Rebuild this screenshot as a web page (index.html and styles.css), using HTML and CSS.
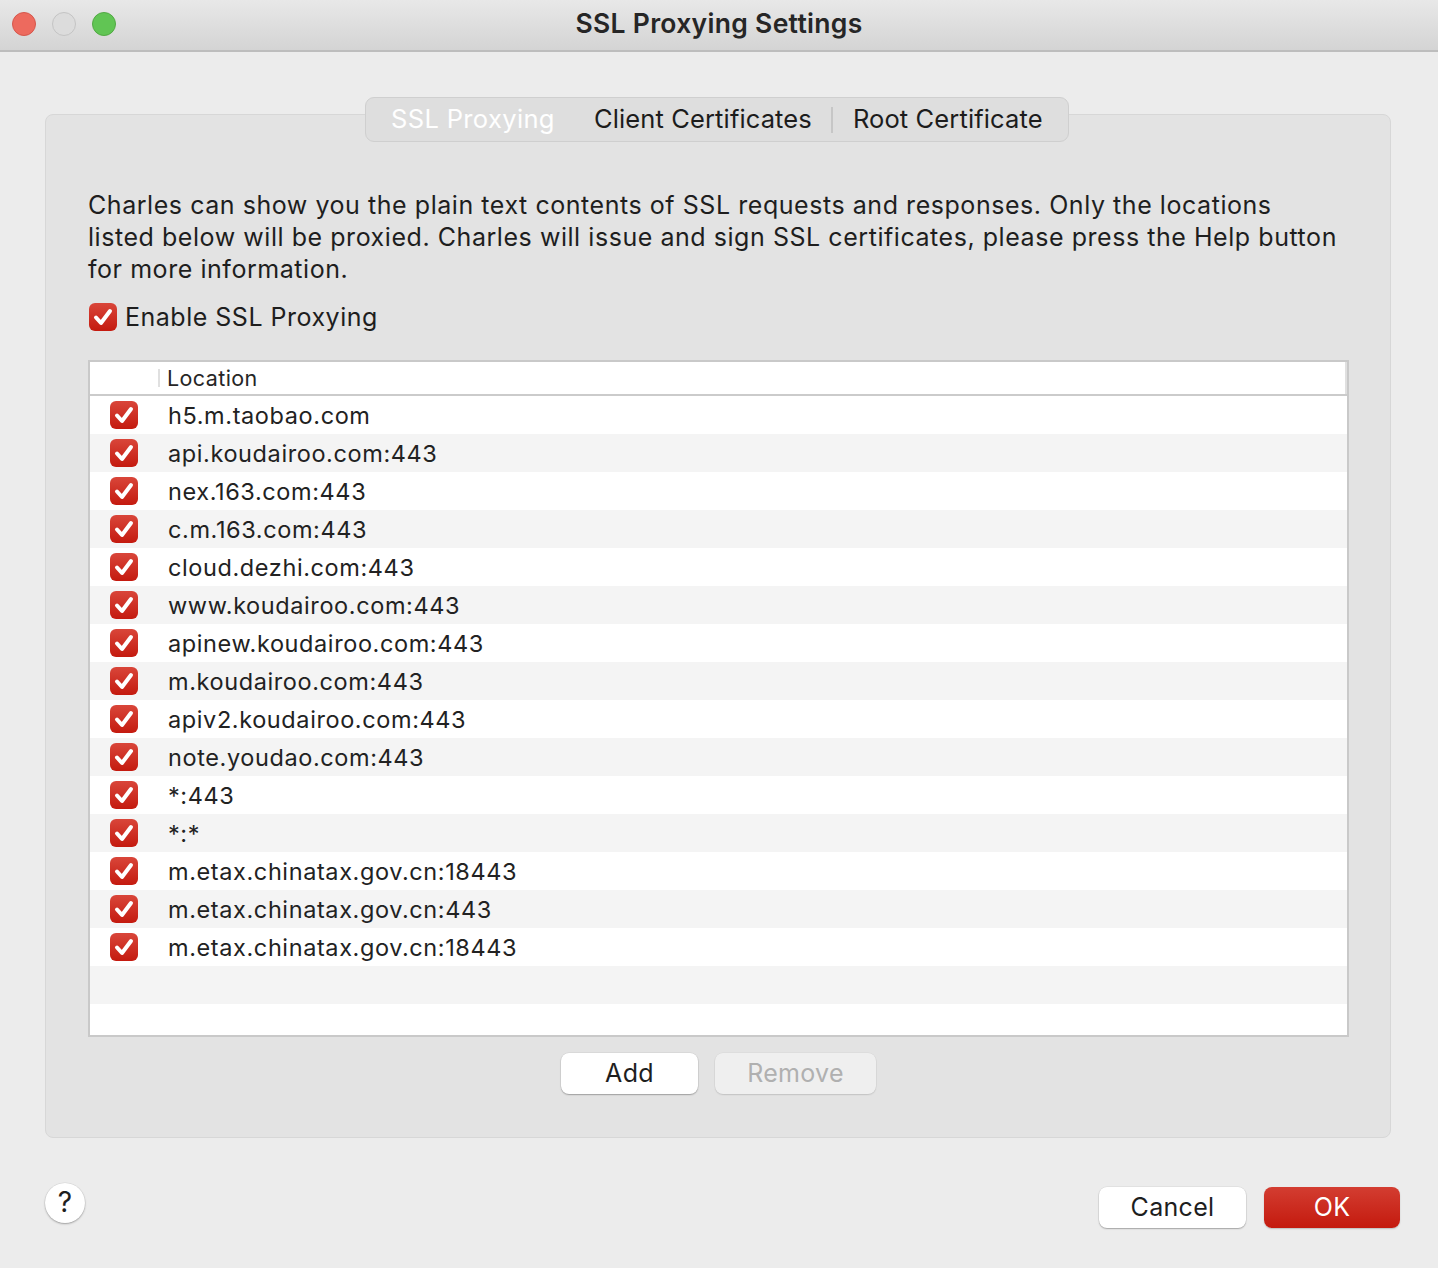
FILE: index.html
```html
<!DOCTYPE html>
<html>
<head>
<meta charset="utf-8">
<link rel="stylesheet" href="styles.css">
</head>
<body>
<div class="window">
  <div class="titlebar">
    <div class="lights">
      <span class="light red"></span>
      <span class="light gray"></span>
      <span class="light green"></span>
    </div>
    <div class="title">SSL Proxying Settings</div>
    <div class="spacer"></div>
  </div>

  <div class="main">
    <div class="group">
      <div class="tabs">
        <div class="tab active">SSL Proxying</div>
        <div class="tab">Client Certificates</div>
        <div class="sep"></div>
        <div class="tab">Root Certificate</div>
      </div>

      <p class="desc">Charles can show you the plain text contents of SSL requests and responses. Only the locations<br>listed below will be proxied. Charles will issue and sign SSL certificates, please press the Help button<br>for more information.</p>

      <label class="enable">
        <span class="cb"><svg viewBox="0 0 28 28"><path d="M7 14.5 L12 20 L21 8" /></svg></span>
        <span>Enable SSL Proxying</span>
      </label>

      <div class="table">
        <div class="thead">
          <div class="th-check"></div>
          <div class="th-loc">Location</div>
        </div>
        <div class="tbody">
          <div class="row"><span class="cb"><svg viewBox="0 0 28 28"><path d="M7 14.5 L12 20 L21 8" /></svg></span><span class="loc">h5.m.taobao.com</span></div>
          <div class="row"><span class="cb"><svg viewBox="0 0 28 28"><path d="M7 14.5 L12 20 L21 8" /></svg></span><span class="loc">api.koudairoo.com:443</span></div>
          <div class="row"><span class="cb"><svg viewBox="0 0 28 28"><path d="M7 14.5 L12 20 L21 8" /></svg></span><span class="loc">nex.163.com:443</span></div>
          <div class="row"><span class="cb"><svg viewBox="0 0 28 28"><path d="M7 14.5 L12 20 L21 8" /></svg></span><span class="loc">c.m.163.com:443</span></div>
          <div class="row"><span class="cb"><svg viewBox="0 0 28 28"><path d="M7 14.5 L12 20 L21 8" /></svg></span><span class="loc">cloud.dezhi.com:443</span></div>
          <div class="row"><span class="cb"><svg viewBox="0 0 28 28"><path d="M7 14.5 L12 20 L21 8" /></svg></span><span class="loc">www.koudairoo.com:443</span></div>
          <div class="row"><span class="cb"><svg viewBox="0 0 28 28"><path d="M7 14.5 L12 20 L21 8" /></svg></span><span class="loc">apinew.koudairoo.com:443</span></div>
          <div class="row"><span class="cb"><svg viewBox="0 0 28 28"><path d="M7 14.5 L12 20 L21 8" /></svg></span><span class="loc">m.koudairoo.com:443</span></div>
          <div class="row"><span class="cb"><svg viewBox="0 0 28 28"><path d="M7 14.5 L12 20 L21 8" /></svg></span><span class="loc">apiv2.koudairoo.com:443</span></div>
          <div class="row"><span class="cb"><svg viewBox="0 0 28 28"><path d="M7 14.5 L12 20 L21 8" /></svg></span><span class="loc">note.youdao.com:443</span></div>
          <div class="row"><span class="cb"><svg viewBox="0 0 28 28"><path d="M7 14.5 L12 20 L21 8" /></svg></span><span class="loc">*:443</span></div>
          <div class="row"><span class="cb"><svg viewBox="0 0 28 28"><path d="M7 14.5 L12 20 L21 8" /></svg></span><span class="loc">*:*</span></div>
          <div class="row"><span class="cb"><svg viewBox="0 0 28 28"><path d="M7 14.5 L12 20 L21 8" /></svg></span><span class="loc">m.etax.chinatax.gov.cn:18443</span></div>
          <div class="row"><span class="cb"><svg viewBox="0 0 28 28"><path d="M7 14.5 L12 20 L21 8" /></svg></span><span class="loc">m.etax.chinatax.gov.cn:443</span></div>
          <div class="row"><span class="cb"><svg viewBox="0 0 28 28"><path d="M7 14.5 L12 20 L21 8" /></svg></span><span class="loc">m.etax.chinatax.gov.cn:18443</span></div>
          <div class="row empty"></div>
          <div class="row empty last"></div>
        </div>
      </div>

      <div class="actions">
        <button class="btn add">Add</button>
        <button class="btn remove" disabled>Remove</button>
      </div>
    </div>

    <div class="footer">
      <button class="help">?</button>
      <div class="footer-right">
        <button class="btn cancel">Cancel</button>
        <button class="btn ok">OK</button>
      </div>
    </div>
  </div>
</div>
</body>
</html>
```

FILE: styles.css
```css
* { box-sizing: border-box; }

html, body {
  margin: 0;
  padding: 0;
}

body {
  width: 1438px;
  height: 1268px;
  background: #ececec;
  font-family: Inter, "Noto Sans", "Liberation Sans", sans-serif;
  color: #1e1e1e;
  overflow: hidden;
}

.window {
  width: 1438px;
  height: 1268px;
  display: flex;
  flex-direction: column;
}

.titlebar {
  height: 52px;
  flex: none;
  display: grid;
  grid-template-columns: 1fr auto 1fr;
  align-items: center;
  background: linear-gradient(#e8e8e8, #d4d4d4);
  border-bottom: 2px solid #bdbdbd;
}

.lights {
  display: flex;
  gap: 16px;
  padding-left: 12px;
  padding-bottom: 2px;
}

.light {
  width: 24px;
  height: 24px;
  border-radius: 50%;
  display: block;
}
.light.red { background: #ed6a5e; border: 1px solid #d5574c; }
.light.gray { background: #dcdcdc; border: 1px solid #c4c4c4; }
.light.green { background: #61c554; border: 1px solid #52a944; }

.title {
  font-size: 26.5px;
  font-weight: 600;
  color: #262626;
  padding-bottom: 4px;
  letter-spacing: 0.3px;
}

.main {
  flex: 1;
  display: flex;
  flex-direction: column;
  padding: 62px 46px 0 45px;
}

.group {
  width: 1346px;
  height: 1024px;
  background: #e3e3e3;
  border: 1px solid #d7d7d7;
  border-radius: 8px;
  display: flex;
  flex-direction: column;
  padding: 0 41px;
}

.tabs {
  align-self: center;
  margin-top: -18px;
  margin-left: -2px;
  width: 704px;
  height: 45px;
  display: flex;
  align-items: center;
  background: #dedede;
  border: 1px solid #cfcfcf;
  border-radius: 9px;
  padding: 0 0 2px 0;
}

.tab {
  font-size: 25.5px;
  letter-spacing: 0.12px;
  color: #1c1c1c;
  white-space: nowrap;
}
.tab.active {
  color: #ffffff;
  padding-left: 25px;
  width: 228px;
  letter-spacing: 0.35px;
}
.sep {
  width: 2px;
  height: 26px;
  background: #c6c6c6;
  margin: 2px 20px 0 19px;
}

.desc {
  margin: 47px 0 0 0;
  font-size: 25px;
  line-height: 32px;
  letter-spacing: 0.55px;
  color: #1e1e1e;
  white-space: nowrap;
  padding-left: 1px;
}

.enable {
  margin-top: 16px;
  display: flex;
  align-items: center;
  gap: 8px;
  height: 32px;
  font-size: 25px;
  letter-spacing: 0.5px;
  padding-left: 2px;
}

.cb {
  width: 28px;
  height: 28px;
  border-radius: 6px;
  background: linear-gradient(#d9463a, #c41a0f);
  display: flex;
  align-items: center;
  justify-content: center;
  flex: none;
}
.cb svg {
  width: 28px;
  height: 28px;
  display: block;
}
.cb svg path {
  fill: none;
  stroke: #ffffff;
  stroke-width: 4;
  stroke-linecap: round;
  stroke-linejoin: round;
}

.table {
  margin-top: 27px;
  margin-left: 1px;
  width: 1261px;
  height: 677px;
  border: 2px solid #c9c9c9;
  background: #ffffff;
  display: flex;
  flex-direction: column;
}

.thead {
  height: 34px;
  flex: none;
  display: flex;
  align-items: center;
  border-bottom: 2px solid #cbcbcb;
}
.th-check {
  width: 70px;
  height: 18px;
  border-right: 2px solid #e0e0e0;
}
.th-loc {
  flex: 1;
  padding-left: 7px;
  font-size: 21.5px;
  letter-spacing: 0.4px;
  color: #262626;
  height: 100%;
  display: flex;
  align-items: center;
  border-right: 2px solid #e0e0e0;
}

.tbody {
  flex: 1;
  display: flex;
  flex-direction: column;
}

.row {
  height: 38px;
  flex: none;
  display: flex;
  align-items: center;
  padding-left: 20px;
}
.row:nth-child(even) { background: #f4f4f4; }
.row.last { flex: 1; }

.row .loc {
  margin-left: 30px;
  font-size: 23.5px;
  letter-spacing: 0.6px;
  color: #222222;
}

.actions {
  margin-top: 16px;
  display: flex;
  justify-content: center;
  gap: 17px;
  padding-left: 1px;
}

.btn {
  font-family: Inter, "Noto Sans", "Liberation Sans", sans-serif;
  height: 41px;
  border-radius: 8px;
  font-size: 25px;
  letter-spacing: 0.3px;
  border: none;
  padding: 0 0 2px 0;
}

.add {
  width: 137px;
  background: #ffffff;
  color: #1e1e1e;
  box-shadow: 0 1px 1.5px rgba(0,0,0,0.28), 0 0 0 0.5px rgba(0,0,0,0.08);
}

.remove {
  width: 161px;
  background: #efefef;
  color: #b0b0b0;
  box-shadow: 0 1px 1.5px rgba(0,0,0,0.12), 0 0 0 0.5px rgba(0,0,0,0.05);
}

.footer {
  margin-top: 45px;
  display: flex;
  align-items: flex-start;
  justify-content: space-between;
  margin-right: -8px;
}

.help {
  width: 40px;
  height: 40px;
  border-radius: 50%;
  border: none;
  background: #ffffff;
  box-shadow: 0 1px 2px rgba(0,0,0,0.3), 0 0 0 0.5px rgba(0,0,0,0.08);
  font-family: Inter, "Noto Sans", "Liberation Sans", sans-serif;
  font-size: 28px;
  color: #1e1e1e;
  padding: 0 0 3px 0;
}

.footer-right {
  display: flex;
  gap: 18px;
  margin-top: 4px;
}

.cancel {
  width: 147px;
  background: #ffffff;
  color: #1e1e1e;
  box-shadow: 0 1px 1.5px rgba(0,0,0,0.28), 0 0 0 0.5px rgba(0,0,0,0.08);
}

.ok {
  width: 136px;
  background: linear-gradient(#d33d31, #c41a0e);
  color: #ffffff;
  box-shadow: 0 1px 1.5px rgba(0,0,0,0.2);
}
```
